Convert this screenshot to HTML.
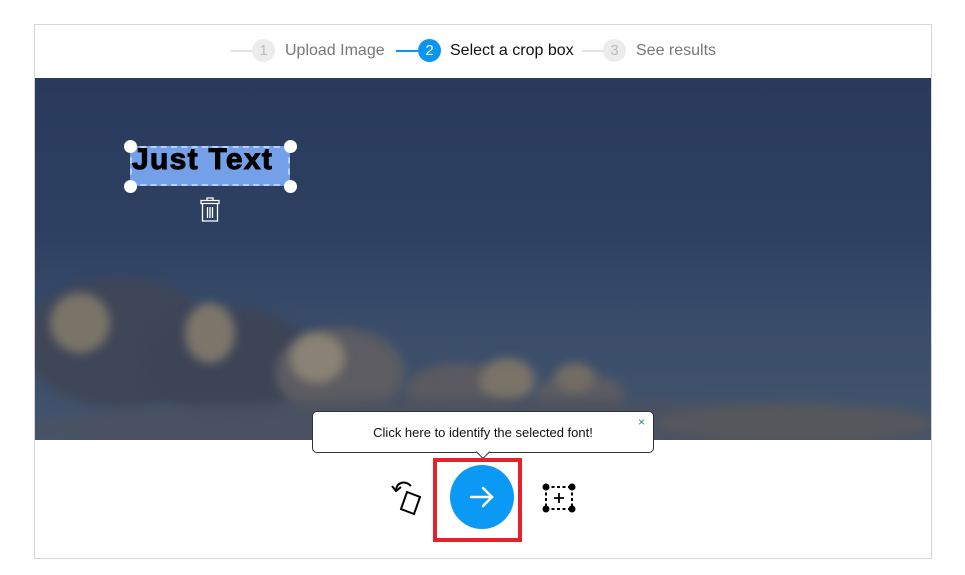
<!DOCTYPE html>
<html><head><meta charset="utf-8"><style>
*{margin:0;padding:0;box-sizing:border-box}
body{width:965px;height:575px;background:#fff;position:relative;overflow:hidden;font-family:"Liberation Sans",sans-serif}
.frame{position:absolute;left:34px;top:24px;width:898px;height:535px;border:1px solid #d5d5d5}
.step{position:absolute;top:39px;height:24px;font-size:16px;line-height:24px}
.line{position:absolute;top:50px;height:2px}
.num{position:absolute;top:39px;width:23px;height:23px;border-radius:50%;font-size:15px;line-height:23px;text-align:center}
.img{position:absolute;left:35px;top:78px;width:896px;height:362px;overflow:hidden;
background:linear-gradient(180deg,#293a5c 0%,#2e4163 45%,#3a4d6a 70%,#43556c 100%)}
.c{position:absolute;border-radius:50%;filter:blur(5px)}
</style></head><body>
<div class="frame"></div>
<div class="line" style="left:231px;width:22px;background:#e3e3e3"></div>
<div class="num" style="left:252px;background:#ececec;color:#bbb">1</div>
<div class="step" style="left:285px;color:#777">Upload Image</div>
<div class="line" style="left:396px;width:22px;background:#0a96f0"></div>
<div class="num" style="left:418px;background:#0a96f0;color:#fff">2</div>
<div class="step" style="left:450px;color:#111">Select a crop box</div>
<div class="line" style="left:582px;width:22px;background:#e3e3e3"></div>
<div class="num" style="left:603px;background:#ececec;color:#bbb">3</div>
<div class="step" style="left:636px;color:#777">See results</div>

<div class="img">
 <div class="c" style="left:-10px;top:200px;width:190px;height:130px;background:#3f4658"></div>
 <div class="c" style="left:15px;top:215px;width:60px;height:60px;background:#7a7468"></div>
 <div class="c" style="left:110px;top:230px;width:170px;height:110px;background:#3d4456"></div>
 <div class="c" style="left:150px;top:225px;width:50px;height:60px;background:#7d766a"></div>
 <div class="c" style="left:240px;top:250px;width:130px;height:90px;background:#5c5c62"></div>
 <div class="c" style="left:255px;top:255px;width:55px;height:50px;background:#8a8274"></div>
 <div class="c" style="left:370px;top:285px;width:110px;height:60px;background:#5a5a60"></div>
 <div class="c" style="left:445px;top:280px;width:55px;height:45px;background:#7a7368"></div>
 <div class="c" style="left:500px;top:295px;width:90px;height:45px;background:#5c5c62"></div>
 <div class="c" style="left:520px;top:285px;width:40px;height:30px;background:#736c64"></div>
 <div class="c" style="left:0;top:320px;width:896px;height:60px;background:#4c5160;opacity:.8"></div>
 <div class="c" style="left:620px;top:325px;width:280px;height:40px;background:#5c5a5a;opacity:.7"></div>
</div>

<!-- crop box -->
<div style="position:absolute;left:130px;top:146px;width:160px;height:40px;background:rgba(120,165,240,.95);border:2px dashed #b9d0f5"></div>
<div style="position:absolute;left:132px;top:143px;font:bold 30px 'Liberation Sans',sans-serif;color:#000;letter-spacing:1.3px;-webkit-text-stroke:1px #000">Just Text</div>
<div style="position:absolute;left:124px;top:140px;width:13px;height:13px;border-radius:50%;background:#fff"></div>
<div style="position:absolute;left:284px;top:140px;width:13px;height:13px;border-radius:50%;background:#fff"></div>
<div style="position:absolute;left:124px;top:180px;width:13px;height:13px;border-radius:50%;background:#fff"></div>
<div style="position:absolute;left:284px;top:180px;width:13px;height:13px;border-radius:50%;background:#fff"></div>
<svg style="position:absolute;left:199px;top:196px" width="22" height="28" viewBox="0 0 22 28" fill="none" stroke="#fff" stroke-width="1.3">
 <path d="M8 4V2h6v2M2 4.5h18v3H2zM3.5 7.5v17.5h15V7.5M8.5 11v11M11 11v11M13.5 11v11"/>
</svg>

<!-- tooltip -->
<div style="position:absolute;left:312px;top:411px;width:342px;height:42px;background:#fff;border:1px solid #333;border-radius:5px;font:13px 'Liberation Sans',sans-serif;color:#111;text-align:center;line-height:42px">Click here to identify the selected font!</div>
<div style="position:absolute;left:638px;top:415px;font-size:12px;color:#2a8a80">×</div>
<div style="position:absolute;left:478px;top:447px;width:10px;height:10px;background:#fff;border-right:1px solid #333;border-bottom:1px solid #333;transform:rotate(45deg)"></div>

<!-- controls -->
<div style="position:absolute;left:433px;top:458px;width:89px;height:84px;border:4px solid #e8202a"></div>
<div style="position:absolute;left:450px;top:465px;width:64px;height:64px;border-radius:50%;background:#0a9af5"></div>
<svg style="position:absolute;left:468px;top:484px" width="28" height="26" viewBox="0 0 28 26" fill="none" stroke="#fff" stroke-width="2.5" stroke-linecap="round">
 <path d="M3 13h21M15 4l9 9-9 9"/>
</svg>
<svg style="position:absolute;left:388px;top:478px" width="40" height="42" viewBox="0 0 40 42" fill="none" stroke="#000" stroke-width="2">
 <path d="M23 8C17 2 9 4 8 12M4 8l4 5 5-4"/>
 <path d="M19 14l13 5-6 17-13-5z"/>
</svg>
<svg style="position:absolute;left:540px;top:483px" width="38" height="30" viewBox="0 0 38 30" fill="none" stroke="#000" stroke-width="2">
 <path d="M6 4h26M6 26h26M6 4v22M32 4v22" stroke-dasharray="3 2.5"/>
 <circle cx="6" cy="4" r="3.5" fill="#000" stroke="none"/><circle cx="32" cy="4" r="3.5" fill="#000" stroke="none"/>
 <circle cx="6" cy="26" r="3.5" fill="#000" stroke="none"/><circle cx="32" cy="26" r="3.5" fill="#000" stroke="none"/>
 <path d="M14 15h10M19 10v10" stroke-width="1.8"/>
</svg>
</body></html>
